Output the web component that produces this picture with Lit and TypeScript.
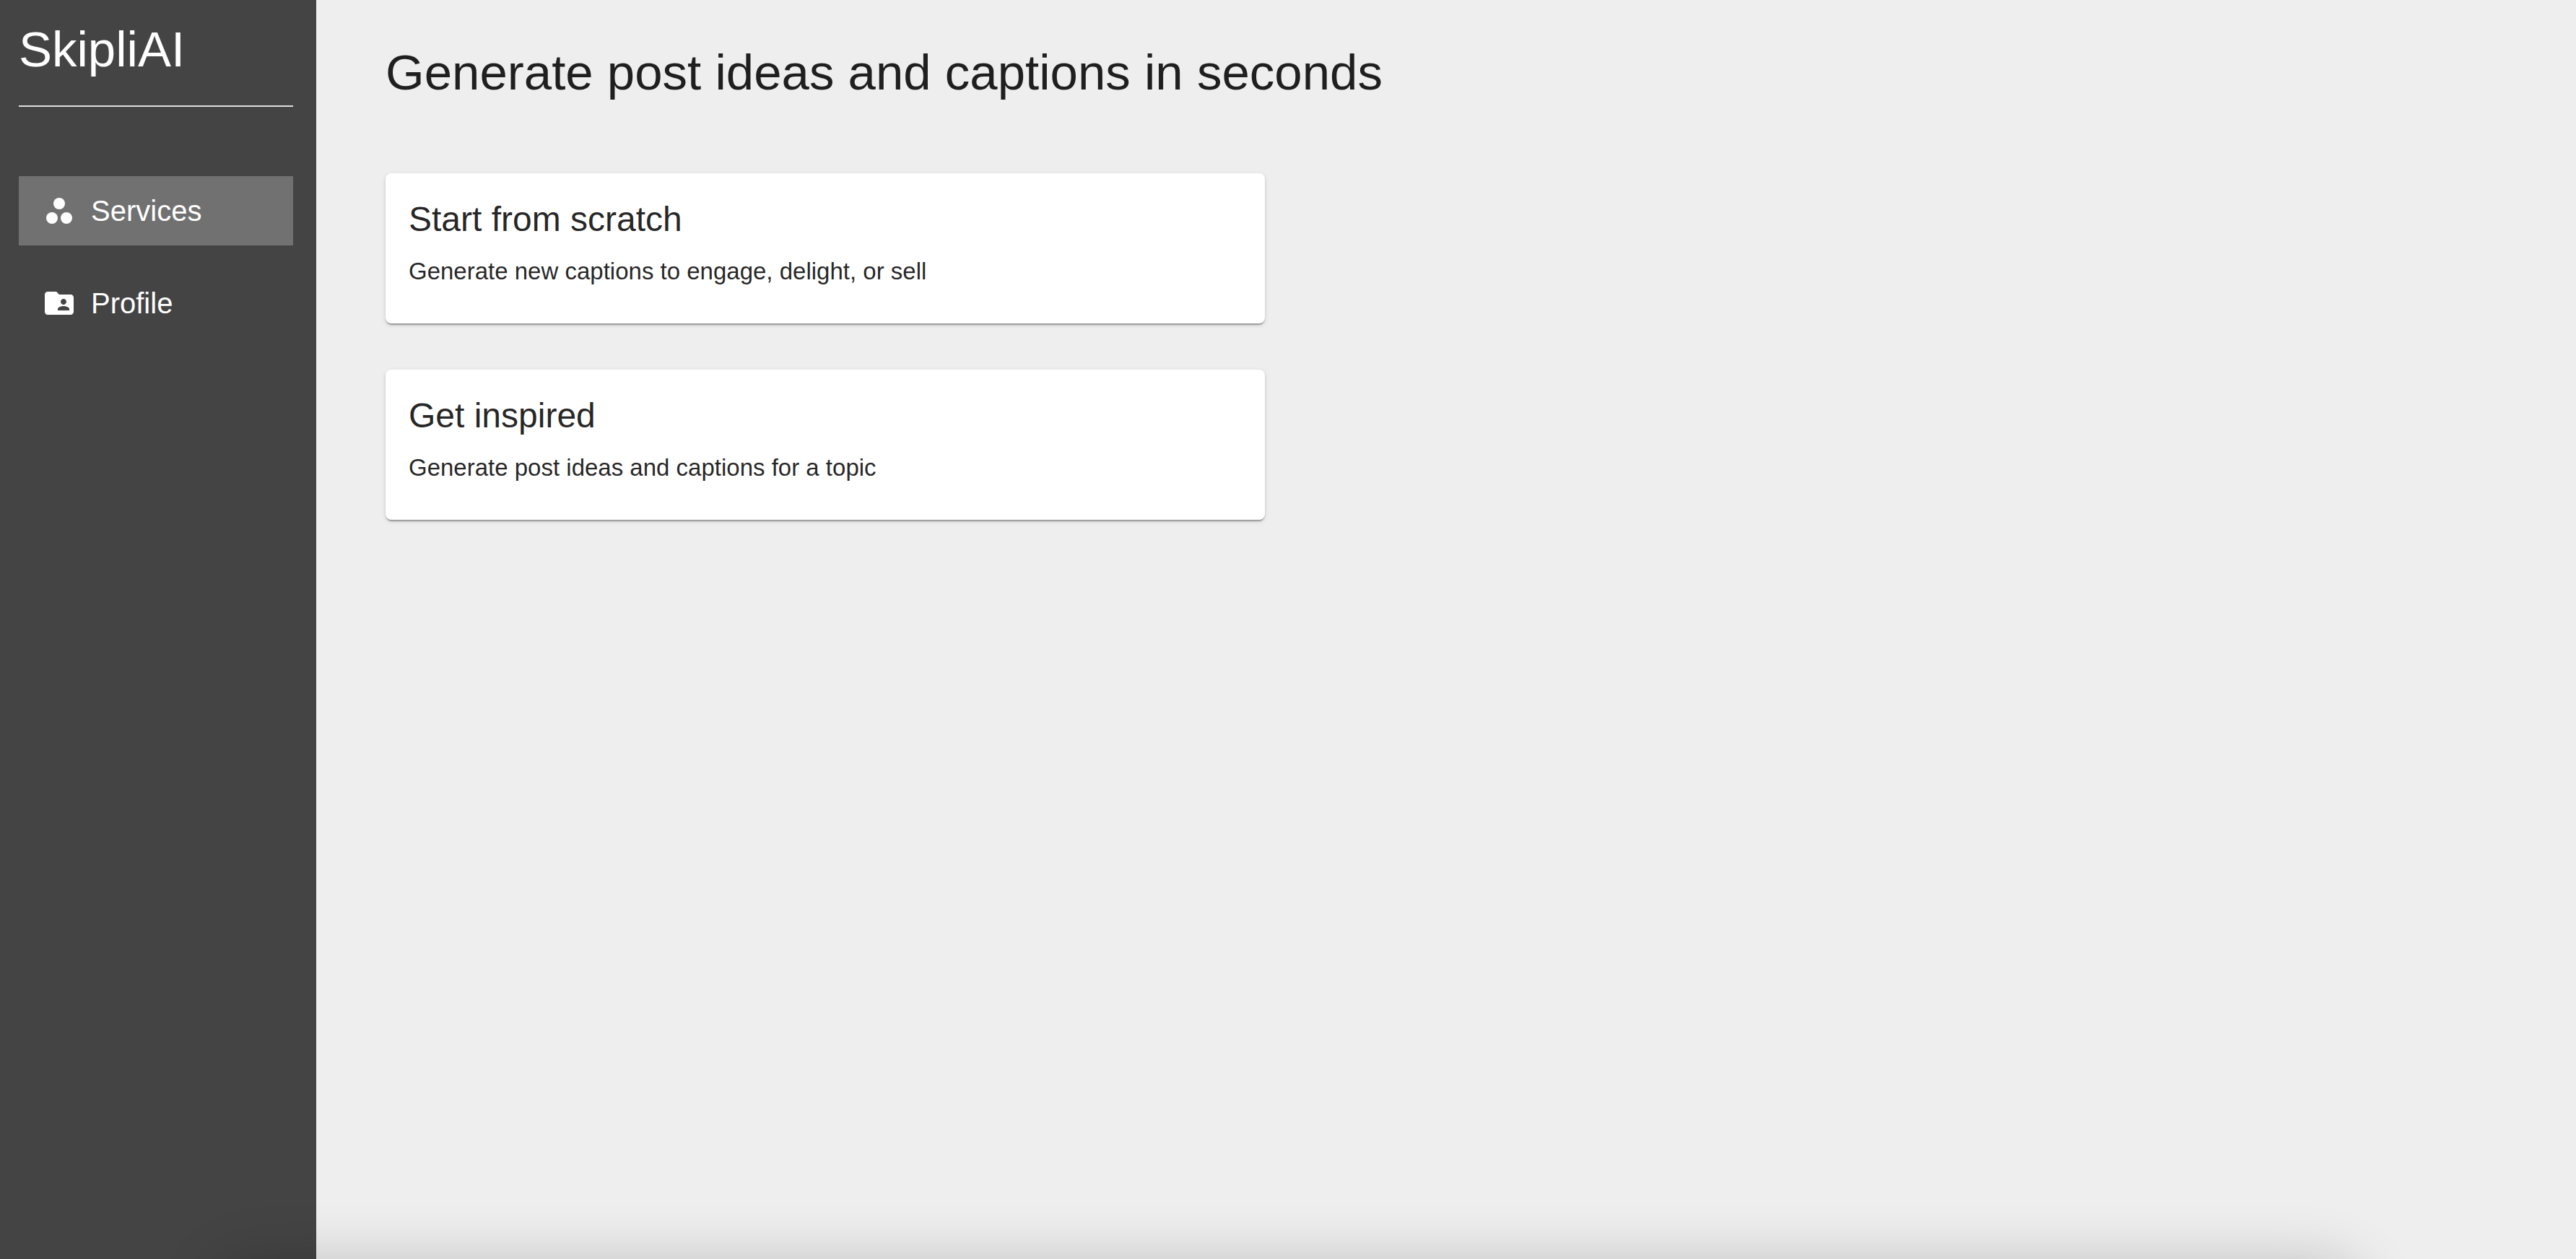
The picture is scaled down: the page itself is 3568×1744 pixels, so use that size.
import { LitElement, html, css, svg } from "lit";
import { customElement, property, state } from "lit/decorators.js";
import { classMap } from "lit/directives/class-map.js";

const servicesIcon = svg`<circle cx="12" cy="7" r="4"/><circle cx="7" cy="17" r="4"/><circle cx="17" cy="17" r="4"/>`;

const profileIcon = svg`<path d="M20 6h-8l-2-2H4c-1.1 0-1.99.9-1.99 2L2 18c0 1.1.9 2 2 2h16c1.1 0 2-.9 2-2V8c0-1.1-.9-2-2-2zm-5 3c1.1 0 2 .9 2 2s-.9 2-2 2-2-.9-2-2 .9-2 2-2zm4 8h-8v-1c0-1.33 2.67-2 4-2s4 .67 4 2v1z"/>`;

const navItems = [
  { id: "services", label: "Services", icon: servicesIcon },
  { id: "profile", label: "Profile", icon: profileIcon },
];

const services = [
  { title: "Start from scratch", text: "Generate new captions to engage, delight, or sell" },
  { title: "Get inspired", text: "Generate post ideas and captions for a topic" },
];

@customElement("service-card")
export class ServiceCard extends LitElement {
  @property() heading = "";
  @property() text = "";

  static styles = css`
    :host {
      display: block;
    }
    .card {
      display: flex;
      flex-direction: column;
      gap: 16px;
      box-sizing: border-box;
      width: 100%;
      padding: 32px 32px 48px;
      border: 0;
      border-radius: 8px;
      background: #fff;
      color: rgba(0, 0, 0, 0.87);
      font: inherit;
      text-align: left;
      cursor: pointer;
      box-shadow:
        0 4px 2px -2px rgba(0, 0, 0, 0.2),
        0 2px 2px rgba(0, 0, 0, 0.14),
        0 2px 6px rgba(0, 0, 0, 0.12);
    }
    .title {
      font-size: 48px;
      line-height: 64px;
    }
    .text {
      font-size: 33px;
      line-height: 48px;
    }
  `;

  render() {
    return html`<button class="card" type="button">
      <span class="title">${this.heading}</span>
      <span class="text">${this.text}</span>
    </button>`;
  }
}

@customElement("app-root")
export class AppRoot extends LitElement {
  @state() private active = "services";

  static styles = css`
    :host {
      position: relative;
      display: grid;
      grid-template-columns: 438px minmax(0, 1fr);
      min-height: 100vh;
      overflow: hidden;
      background: #eee;
      font-family: "Liberation Sans", Helvetica, Arial, sans-serif;
    }
    .sidebar {
      padding: 26px 32px 26px 26px;
      background: #444;
      color: #fff;
    }
    .brand {
      padding-bottom: 34px;
      border-bottom: 2px solid #e0e0e0;
      font-size: 69px;
      line-height: 86px;
    }
    .nav {
      display: flex;
      flex-direction: column;
      gap: 32px;
      padding-top: 96px;
    }
    .link {
      display: flex;
      align-items: center;
      gap: 20px;
      padding: 24px 32px;
      color: inherit;
      font-size: 40px;
      line-height: 48px;
      text-decoration: none;
    }
    .link.active {
      background: #717171;
    }
    .icon {
      width: 48px;
      height: 48px;
      fill: currentColor;
    }
    .main {
      padding: 58px 96px;
    }
    .heading {
      margin: 0 0 96px;
      color: rgba(0, 0, 0, 0.87);
      font-size: 69px;
      font-weight: 400;
      line-height: 86px;
    }
    .cards {
      display: flex;
      flex-direction: column;
      gap: 64px;
      max-width: 1218px;
    }
    .shade {
      position: absolute;
      top: 100%;
      left: 304px;
      right: 304px;
      height: 200px;
      border-radius: 40px;
      box-shadow: 0 10px 84px rgba(0, 0, 0, 0.23);
      pointer-events: none;
    }
  `;

  render() {
    return html`
      <aside class="sidebar">
        <div class="brand">SkipliAI</div>
        <nav class="nav">
          ${navItems.map(
            (item) => html`<a
              class=${classMap({ link: true, active: item.id === this.active })}
              href="#${item.id}"
              @click=${() => (this.active = item.id)}
            >
              <svg class="icon" viewBox="0 0 24 24" aria-hidden="true">${item.icon}</svg>
              <span>${item.label}</span>
            </a>`,
          )}
        </nav>
      </aside>
      <main class="main">
        <h1 class="heading">Generate post ideas and captions in seconds</h1>
        <div class="cards">
          ${services.map(
            (s) => html`<service-card .heading=${s.title} .text=${s.text}></service-card>`,
          )}
        </div>
      </main>
      <div class="shade"></div>
    `;
  }
}
